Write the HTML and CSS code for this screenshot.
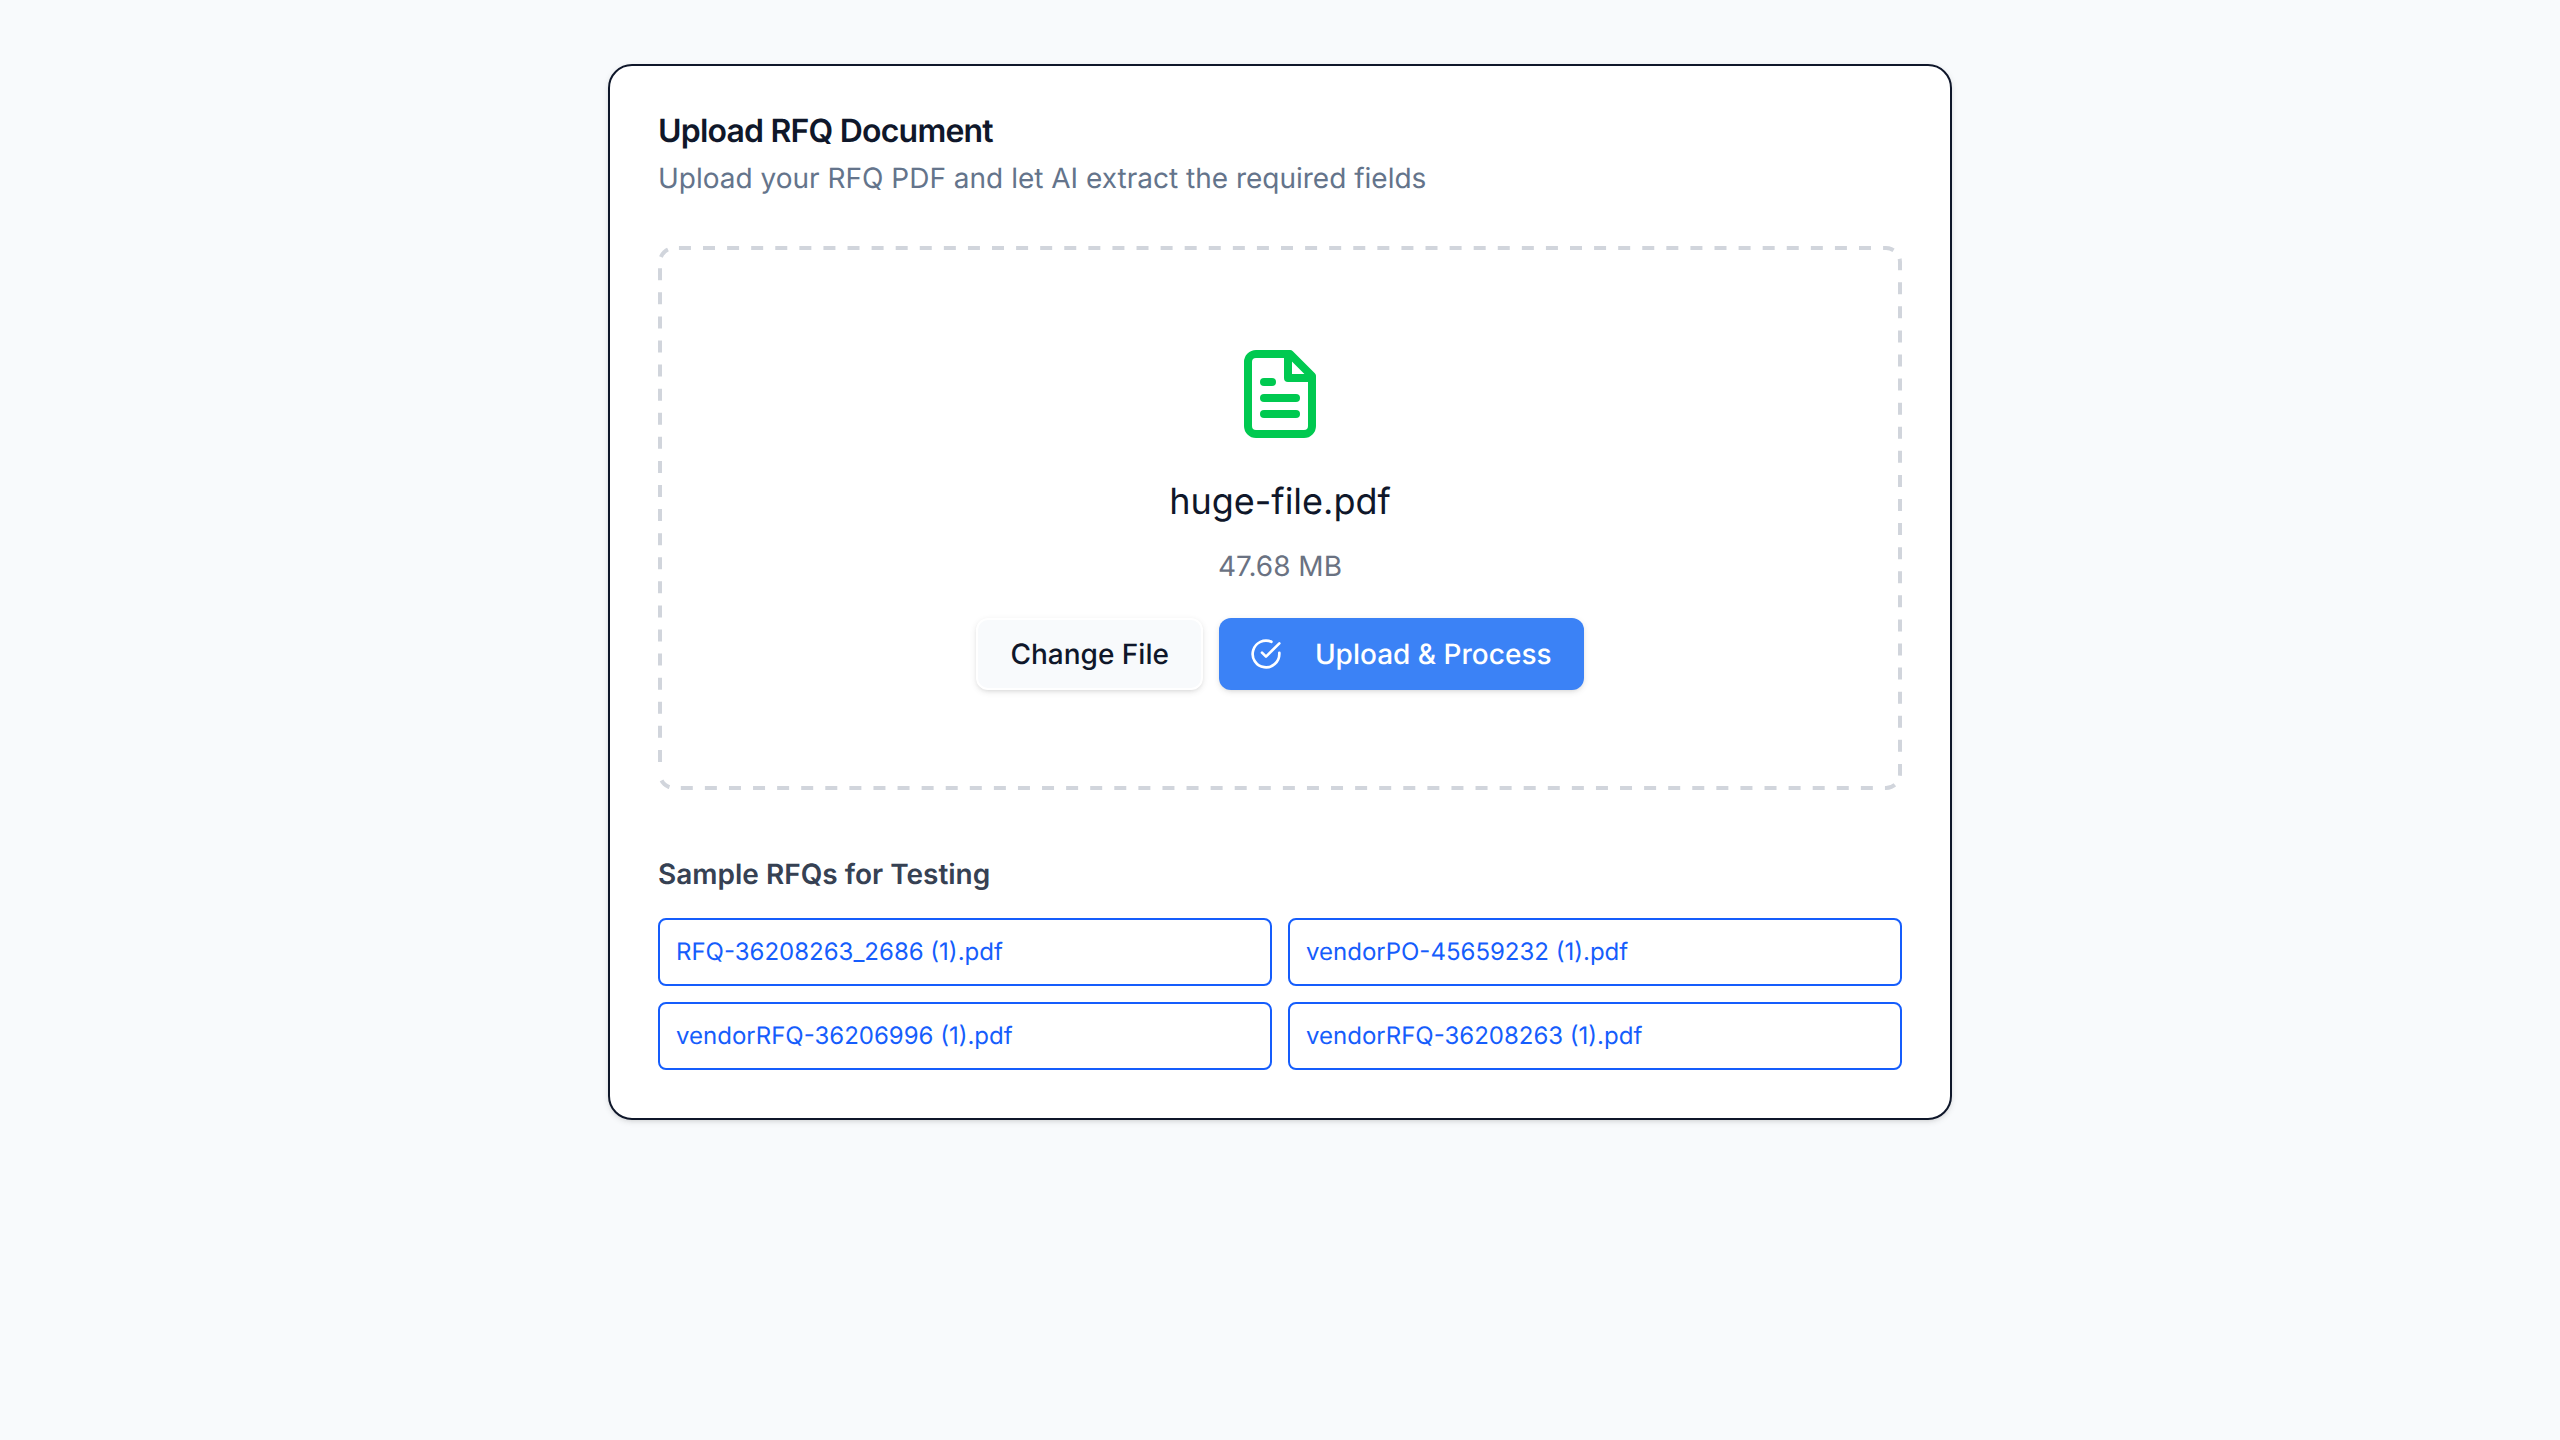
FILE: index.html
```html
<!DOCTYPE html>
<html lang="en">
<head>
<meta charset="utf-8">
<title>Upload RFQ Document</title>
<link rel="stylesheet" href="styles.css">
</head>
<body>
<main class="page">
  <section class="card">
    <header class="card-header">
      <h1 class="card-title">Upload RFQ Document</h1>
      <p class="card-description">Upload your RFQ PDF and let AI extract the required fields</p>
    </header>
    <div class="dropzone">
      <svg class="dropzone-outline" viewBox="0 0 1244 544" fill="none" stroke="currentColor" stroke-width="8" stroke-dasharray="12 12.083" stroke-dashoffset="12" aria-hidden="true">
        <path d="M0 528V16A16 16 0 0 1 16 0H1228A16 16 0 0 1 1244 16V528A16 16 0 0 1 1228 544H16A16 16 0 0 1 0 528"/>
      </svg>
      <svg class="file-icon" viewBox="0 0 24 24" fill="none" stroke="currentColor" stroke-width="2" stroke-linecap="round" stroke-linejoin="round">
        <path d="M14.5 2H6a2 2 0 0 0-2 2v16a2 2 0 0 0 2 2h12a2 2 0 0 0 2-2V7.5L14.5 2z"/>
        <path d="M14 2v6h6"/>
        <path d="M10 9H8"/>
        <path d="M16 13H8"/>
        <path d="M16 17H8"/>
      </svg>
      <p class="file-name">huge-file.pdf</p>
      <p class="file-size">47.68 MB</p>
      <div class="actions">
        <button class="button button-outline" type="button">Change File</button>
        <button class="button button-primary" type="button">
          <svg class="check-icon" viewBox="0 0 24 24" fill="none" stroke="currentColor" stroke-width="2" stroke-linecap="round" stroke-linejoin="round">
            <path d="M22 11.08V12a10 10 0 1 1-5.93-9.14"/>
            <path d="m9 11 3 3L22 4"/>
          </svg>
          Upload &amp; Process
        </button>
      </div>
    </div>
    <section class="samples">
      <h2 class="samples-title">Sample RFQs for Testing</h2>
      <div class="sample-grid">
        <a class="sample">RFQ-36208263_2686 (1).pdf</a>
        <a class="sample">vendorPO-45659232 (1).pdf</a>
        <a class="sample">vendorRFQ-36206996 (1).pdf</a>
        <a class="sample">vendorRFQ-36208263 (1).pdf</a>
      </div>
    </section>
  </section>
</main>
</body>
</html>
```
FILE: styles.css
```css
*,
*::before,
*::after {
  box-sizing: border-box;
}

body {
  margin: 0;
  background: #f8fafc;
  color: #0f172a;
  font-family: Inter, "Liberation Sans", sans-serif;
  font-variation-settings: "opsz" 14;
  font-size: 28px;
  line-height: 40px;
  text-rendering: geometricPrecision;
  -webkit-font-smoothing: antialiased;
}

h1, h2, p {
  margin: 0;
}

.page {
  min-height: 1440px;
  padding: 64px;
}

.card {
  width: 1344px;
  margin: 0 auto;
  padding: 48px;
  background: #fff;
  border: 2px solid #0f172a;
  border-radius: 24px;
  box-shadow: 0 2px 6px rgba(0, 0, 0, 0.1), 0 2px 4px -2px rgba(0, 0, 0, 0.1);
}

.card-header {
  display: flex;
  flex-direction: column;
  gap: 10px;
  margin-bottom: 48px;
}

.card-title {
  font-size: 32px;
  font-weight: 600;
  line-height: 34px;
  letter-spacing: -0.025em;
}

.card-description {
  color: #64748b;
}

.dropzone {
  position: relative;
  display: flex;
  flex-direction: column;
  align-items: center;
  padding: 100px;
}

/* The outline follows the outer edge; the outer half of its stroke is clipped. */
.dropzone-outline {
  position: absolute;
  inset: 0;
  width: 100%;
  height: 100%;
  overflow: hidden;
  border-radius: 16px;
  color: #d1d5dc;
  pointer-events: none;
}

.file-icon {
  width: 96px;
  height: 96px;
  margin-bottom: 32px;
  color: #00c950;
}

.file-name {
  margin-bottom: 18px;
  font-size: 36px;
  line-height: 54px;
}

.file-size {
  margin-bottom: 32px;
  color: #6a7282;
}

.actions {
  display: flex;
  gap: 16px;
}

.button {
  display: inline-flex;
  align-items: center;
  gap: 16px;
  height: 72px;
  padding: 0 32px;
  border: 0;
  border-radius: 12px;
  font: inherit;
  font-weight: 500;
  font-variation-settings: inherit;
  text-rendering: inherit;
  white-space: nowrap;
  box-shadow: 0 2px 6px rgba(0, 0, 0, 0.1), 0 2px 4px -2px rgba(0, 0, 0, 0.1);
}

.button-outline {
  border: 2px solid #fff;
  background: #f8fafc;
  color: #0f172a;
}

.button-primary {
  background: #3b82f6;
  color: #fff;
}

.check-icon {
  width: 32px;
  height: 32px;
  margin-left: -1px;
  margin-right: 17px;
}

.samples {
  margin-top: 64px;
}

.samples-title {
  margin-bottom: 24px;
  color: #364153;
  font-size: 28px;
  font-weight: 600;
  line-height: 40px;
}

.sample-grid {
  display: grid;
  grid-template-columns: 1fr 1fr;
  gap: 16px;
}

.sample {
  padding: 16px;
  border: 2px solid #155dfc;
  border-radius: 8px;
  color: #155dfc;
  font-size: 24px;
  line-height: 32px;
}
```
